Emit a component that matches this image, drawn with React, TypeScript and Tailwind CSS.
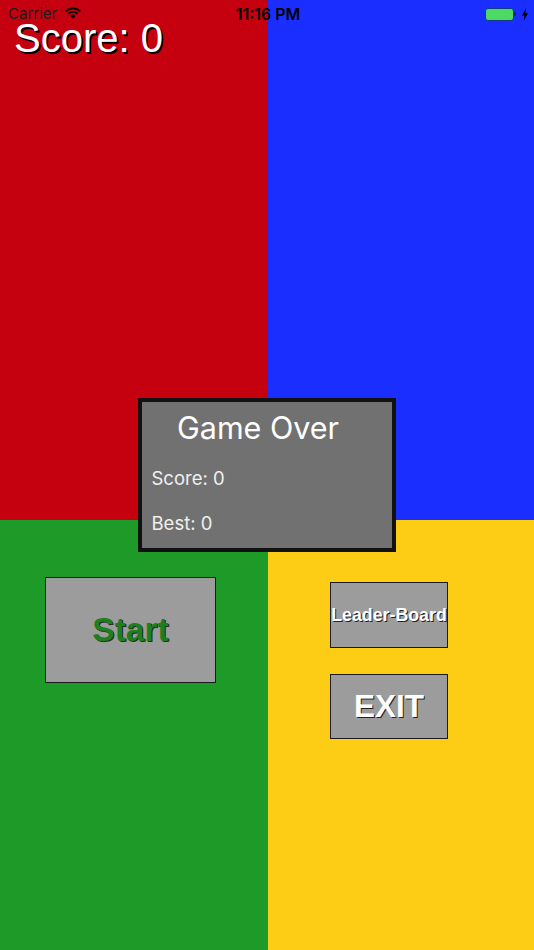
const font = "font-['Liberation_Sans',Arial,sans-serif]";

function GameButton({ label, className }: { label: string; className: string }) {
  return (
    <button className={`flex items-center justify-center border-[1.5px] border-[#1a1a1a] bg-[#9c9c9c] font-bold ${className}`}>
      {label}
    </button>
  );
}

function StatusBar() {
  return (
    <div className="absolute inset-x-0 top-0 flex h-[28px] items-center justify-between pl-[8px] pr-[6px] font-['Inter',sans-serif] text-black">
      <div className="flex w-[180px] items-center gap-[8px] text-[15px]">
        <span className="text-[#1c1c1c]">Carrier</span>
        <svg width="16" height="12" viewBox="0 0 16 12" className="-mt-[3px]">
          <path d="M0.8 4.4a10.2 10.2 0 0 1 14.4 0" fill="none" stroke="#000" strokeWidth="1.7" />
          <path d="M3.2 6.8a6.8 6.8 0 0 1 9.6 0" fill="none" stroke="#000" strokeWidth="1.7" />
          <path d="M5.4 8.9a3.6 3.6 0 0 1 5.2 0L8 11.6z" fill="#000" />
        </svg>
      </div>
      <span className="-mt-[1px] text-[16px] font-semibold">11:16 PM</span>
      <div className="flex w-[180px] items-center justify-end gap-[6px]">
        <div className="flex items-center">
          <div className="h-[13px] w-[29px] rounded-[3px] border border-[#123a8a] bg-[#4cd964]" />
          <div className="h-[4px] w-[2px] rounded-r-sm bg-[#0b1f66]" />
        </div>
        <svg width="6" height="13" viewBox="0 0 6 13">
          <path d="M4.2 0L0 7.6h2.5L1.6 13 6 5.2H3.4z" fill="#000" />
        </svg>
      </div>
    </div>
  );
}

export default function App() {
  return (
    <div className={`relative grid h-[950px] w-[534px] grid-cols-[268px_266px] grid-rows-[520px_430px] overflow-hidden ${font}`}>
      <div className="bg-[#c5000f]" />
      <div className="bg-[#1a2fff]" />
      <div className="bg-[#1e9a29] pl-[45px] pt-[57px]">
        <GameButton
          label="Start"
          className="h-[106px] w-[171px] text-[33.5px] text-[#1e7f1e] [text-shadow:1px_1px_0_#2a2a2a]"
        />
      </div>
      <div className="flex flex-col gap-[26px] bg-[#fccd14] pl-[62px] pt-[62px]">
        <GameButton
          label="Leader-Board"
          className="h-[66px] w-[118px] text-[17.8px] whitespace-nowrap text-white [text-shadow:1px_1px_0_#222]"
        />
        <GameButton
          label="EXIT"
          className="h-[65px] w-[118px] text-[31.5px] text-white [text-shadow:1px_1px_0_#222]"
        />
      </div>

      <StatusBar />
      <div className="absolute left-[14px] top-[13px] text-[40px] leading-[50px] text-white [text-shadow:1.5px_1.5px_0_#000]">
        Score: 0
      </div>

      <div className="absolute left-[138px] top-[398px] flex h-[154px] w-[258px] flex-col border-[4px] border-[#111111] bg-[#717171] font-['Inter',sans-serif] text-white">
        <div className="pl-[35px] pt-[6px] text-[30.5px] leading-[40px] font-normal">Game Over</div>
        <div className="pl-[9.5px] pt-[18px] text-[18.5px] leading-[24px] text-[#f0f0f0]">Score: 0</div>
        <div className="pl-[9.5px] pt-[21px] text-[18.5px] leading-[24px] text-[#f0f0f0]">Best: 0</div>
      </div>
    </div>
  );
}
